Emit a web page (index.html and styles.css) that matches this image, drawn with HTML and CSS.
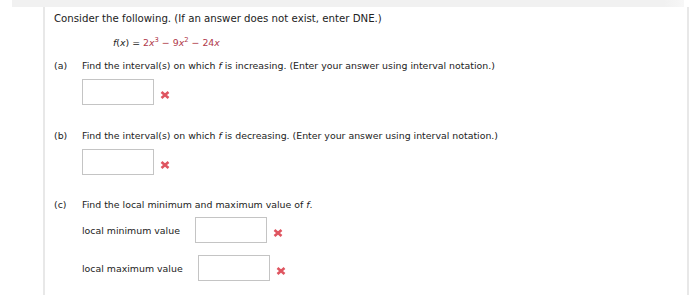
FILE: index.html
```html
<!DOCTYPE html>
<html>
<head>
<meta charset="utf-8">
<link rel="stylesheet" href="styles.css">
</head>
<body>
<div class="strip"></div>
<div class="main">
  <p class="intro">Consider the following. (If an answer does not exist, enter DNE.)</p>
  <p class="formula"><i>f</i>(<i>x</i>) = <span class="expr">2<i>x</i><sup>3</sup> − 9<i>x</i><sup>2</sup> − 24<i>x</i></span></p>

  <div class="part">
    <div class="q"><span class="lbl">(a)</span><span>Find the interval(s) on which <i>f</i> is increasing. (Enter your answer using interval notation.)</span></div>
    <div class="ans"><span class="box"></span><svg class="x" viewBox="0 0 10 8" width="10" height="8"><path d="M1.5 1 L8.5 7 M8.5 1 L1.5 7"/></svg></div>
  </div>

  <div class="part">
    <div class="q"><span class="lbl">(b)</span><span>Find the interval(s) on which <i>f</i> is decreasing. (Enter your answer using interval notation.)</span></div>
    <div class="ans"><span class="box"></span><svg class="x" viewBox="0 0 10 8" width="10" height="8"><path d="M1.5 1 L8.5 7 M8.5 1 L1.5 7"/></svg></div>
  </div>

  <div class="part part-c">
    <div class="q"><span class="lbl">(c)</span><span>Find the local minimum and maximum value of <i>f</i>.</span></div>
    <div class="ans"><span class="name">local minimum value</span><span class="box"></span><svg class="x" viewBox="0 0 10 8" width="10" height="8"><path d="M1.5 1 L8.5 7 M8.5 1 L1.5 7"/></svg></div>
    <div class="ans second"><span class="name">local maximum value</span><span class="box"></span><svg class="x" viewBox="0 0 10 8" width="10" height="8"><path d="M1.5 1 L8.5 7 M8.5 1 L1.5 7"/></svg></div>
  </div>
</div>
</body>
</html>
```
FILE: styles.css
```css
html, body {
  margin: 0;
  background: #fff;
}
body {
  font-family: "DejaVu Sans", Verdana, sans-serif;
  font-size: 9.4px;
  color: #222;
  width: 700px;
  height: 295px;
  overflow: hidden;
}
.strip {
  margin-left: 12px;
  width: 672px;
  height: 7px;
  background: linear-gradient(to right, #f1f1f1 97%, #f7f7f7);
}
.main {
  margin-left: 43px;
  width: 633px;
  height: 288px;
  border-left: 2px solid #e8e8e8;
  border-right: 2px solid #e8e8e8;
  padding-left: 9px;
  padding-top: 5px;
  box-sizing: content-box;
}
p {
  margin: 0;
}
.intro {
  font-size: 10.2px;
  line-height: 14px;
}
.formula {
  line-height: 14px;
  margin-top: 10px;
  padding-left: 59px;
}
.expr {
  color: #b0384a;
}
sup {
  font-size: 6.8px;
  line-height: 0;
  vertical-align: 4px;
}
.part {
  margin-top: 9px;
}
.part + .part {
  margin-top: 24px;
}
.part.part-c {
  margin-top: 23px;
}
.q {
  display: flex;
  line-height: 14px;
}
.lbl {
  width: 28px;
  flex: none;
}
.ans {
  display: flex;
  align-items: center;
  margin-top: 6px;
  padding-left: 28px;
}
.part-c .ans {
  margin-top: 5px;
}
.part-c .ans.second {
  margin-top: 12px;
}
.name {
  margin-right: 15px;
}
.box {
  display: block;
  width: 70px;
  height: 24px;
  border: 1px solid #c4c4c4;
  background: #fff;
}
.x {
  margin-left: 6px;
  margin-top: 5px;
  fill: none;
  stroke: #df5560;
  stroke-width: 2.6;
}
```
